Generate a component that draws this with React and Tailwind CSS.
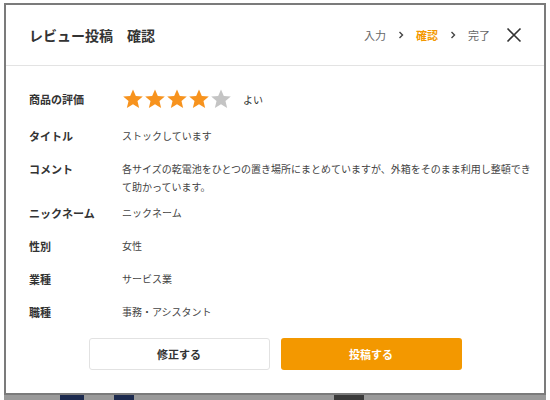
import React from 'react';

const rows = [
  { label: 'タイトル', value: 'ストックしています' },
  {
    label: 'コメント',
    value: '各サイズの乾電池をひとつの置き場所にまとめていますが、外箱をそのまま利用し整頓できて助かっています。',
  },
  { label: 'ニックネーム', value: 'ニックネーム' },
  { label: '性別', value: '女性' },
  { label: '業種', value: 'サービス業' },
  { label: '職種', value: '事務・アシスタント' },
];

function Star({ filled }) {
  return (
    <svg className="h-[22px] w-[22px]" viewBox="0 0 24 24">
      <path
        d="M12 1.5l3.1 7.1 7.6.6-5.8 5 1.8 7.5L12 17.7l-6.7 4 1.8-7.5-5.8-5 7.6-.6z"
        fill={filled ? '#f7931e' : '#c4c4c4'}
      />
    </svg>
  );
}

function Chevron() {
  return (
    <svg className="h-[8px] w-[6px] mx-[12px]" fill="none" stroke="#444" viewBox="0 0 6 8">
      <path d="M1.5 1l3 3-3 3" strokeWidth="1.4" />
    </svg>
  );
}

export default function App() {
  return (
    <div
      className="w-[550px] h-[400px] bg-white overflow-hidden"
      style={{ fontFamily: '"Noto Sans CJK JP", "Noto Sans", sans-serif' }}
    >
      <div className="ml-[4px] mt-[3px] w-[542px] h-[392px] bg-[#7b7b7b] p-[2px]">
        <div className="bg-white h-[388px] flex flex-col">
          <div className="h-[61px] flex items-center pl-[23px] pr-[22px] border-b border-[#e3e3e3]">
            <h1 className="text-[14px] font-bold text-[#333]">レビュー投稿　確認</h1>
            <div className="ml-auto flex items-center text-[11px] text-[#666]">
              <span>入力</span>
              <Chevron />
              <span className="text-[#f39800] font-bold">確認</span>
              <Chevron />
              <span>完了</span>
              <svg className="ml-[16px] h-[16px] w-[16px]" fill="none" stroke="#333" viewBox="0 0 16 16">
                <path d="M1.5 1.5l13 13M14.5 1.5l-13 13" strokeWidth="1.6" />
              </svg>
            </div>
          </div>

          <div className="pl-[23px] pt-[22px] flex flex-col">
            <div className="flex items-center h-[22px]">
              <div className="w-[93px] text-[11px] font-bold text-[#333]">商品の評価</div>
              <div className="flex items-center">
                <Star filled />
                <Star filled />
                <Star filled />
                <Star filled />
                <Star />
              </div>
              <span className="ml-[11px] text-[10px] text-[#333]">よい</span>
            </div>

            {rows.map((r, i) => (
              <div
                key={r.label}
                className={`flex leading-[18px] ${i === 0 ? 'mt-[17px]' : i === 2 ? 'mt-[8px]' : 'mt-[15px]'}`}
              >
                <div className="w-[93px] shrink-0 text-[11px] font-bold text-[#333]">{r.label}</div>
                <div className="w-[412px] text-[10px] text-[#444]">{r.value}</div>
              </div>
            ))}
          </div>

          <div className="mt-[17px] flex justify-center gap-[11px]">
            <button className="w-[181px] h-[32px] rounded-[3px] border border-[#e2e2e2] bg-white text-[11px] font-bold text-[#333]">
              修正する
            </button>
            <button className="w-[181px] h-[32px] rounded-[3px] bg-[#f39800] text-[11px] font-bold text-white">
              投稿する
            </button>
          </div>
        </div>
      </div>
      <div className="ml-[4px] w-[542px] h-[5px] bg-[#9a9a9a] flex">
        <div className="ml-[56px] w-[24px] bg-[#1d2b4f]" />
        <div className="ml-[30px] w-[20px] bg-[#1d2b4f]" />
        <div className="ml-[200px] w-[30px] bg-[#3a3a3a]" />
      </div>
    </div>
  );
}
